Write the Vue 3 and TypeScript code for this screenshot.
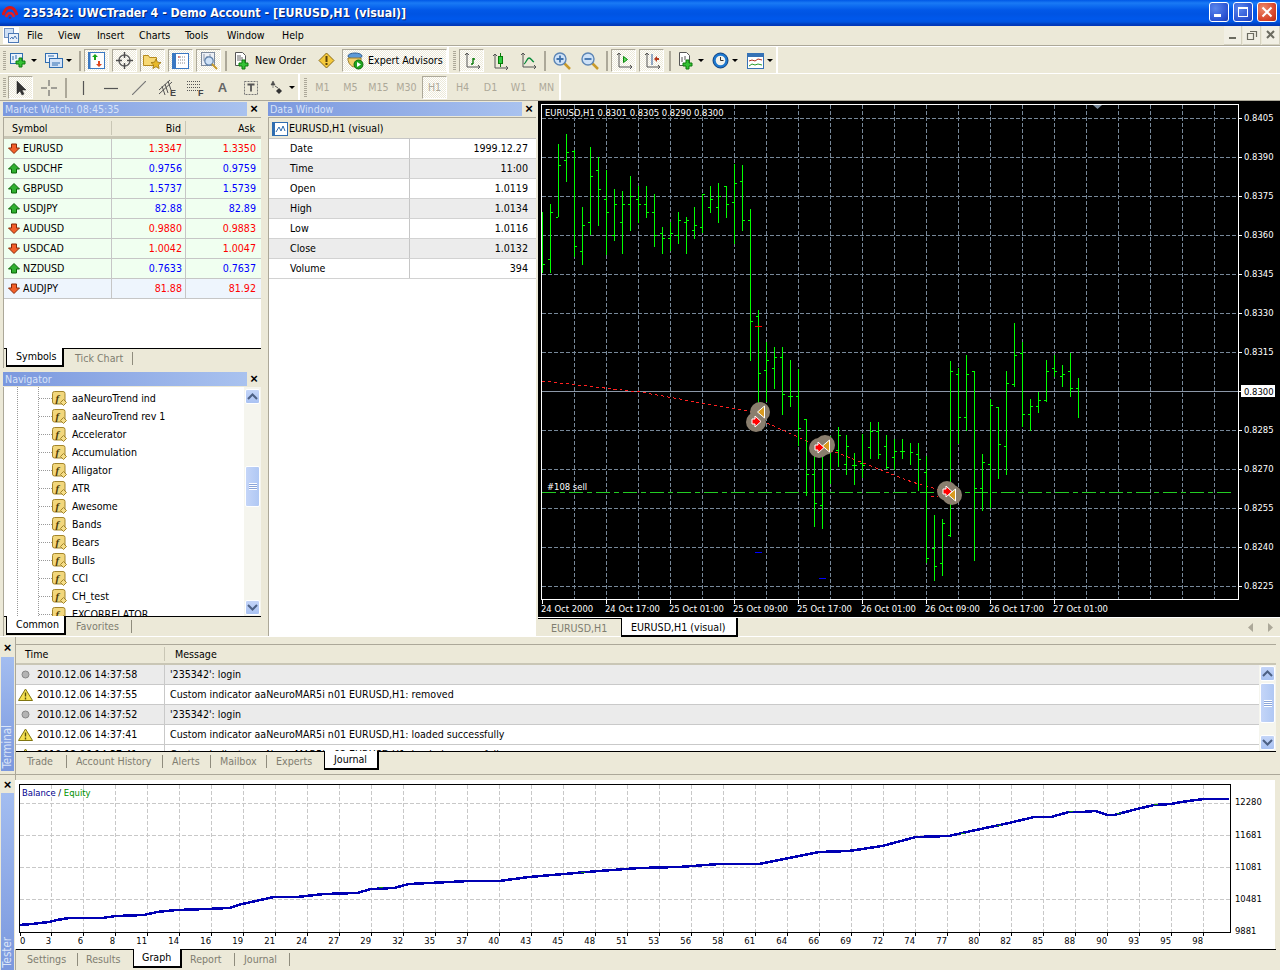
<script setup lang="ts">
type Bar = [number, number, number, number | null, number | null]
const bars: Bar[] = [
  [542,212,273,null,264],[550,204,273,259,212],[558,144,217,217,165],[566,134,182,160,152],[574,150,257,151,246],
  [582,207,265,251,225],[590,147,235,222,176],[598,157,226,170,189],[606,170,255,199,212],[614,189,241,235,204],
  [622,191,254,222,204],[630,176,231,204,196],[638,186,223,199,204],[646,186,218,204,212],[654,194,247,212,235],
  [662,227,254,233,238],[670,222,251,238,233],[678,212,244,235,220],[686,217,254,222,220],[694,207,239,230,225],
  [702,194,233,227,194],[710,186,213,207,199],[718,183,223,207,196],[726,186,218,186,204],[734,164,244,202,183],
  [742,165,231,181,220],[750,209,361,220,321],[758,310,410,316,373],[766,342,402,370,360],[774,347,389,368,357],
  [782,347,415,357,394],[790,360,407,396,396],[798,369,446,396,428],[806,419,496,419,474],[814,442,527,474,503],
  [822,440,529,505,453],[830,436,484,451,447],[838,427,467,450,435],[846,435,475,464,446],[854,453,485,465,465],
  [862,434,478,463,465],[870,422,459,447,431],[878,422,459,431,454],[886,435,469,446,467],[894,439,470,457,451],
  [902,439,459,451,451],[910,443,465,null,452],[918,443,491,454,459],[926,456,563,472,558],[934,515,581,548,566],
  [942,519,576,563,523],[950,361,537,535,371],[958,368,444,374,417],[966,355,431,417,374],[974,371,561,371,488],
  [982,454,511,488,462],[990,399,508,464,405],[998,407,479,407,444],[1006,371,475,446,383],[1014,323,387,384,355],
  [1022,342,427,353,414],[1030,399,431,414,406],[1038,392,413,406,400],[1046,360,402,400,371],[1054,355,377,368,371],
  [1062,365,387,376,374],[1070,353,397,371,388],[1078,378,418,388,null]
]
const hLines = Array.from({ length: 13 }, (_, i) => 118 + Math.round(i * 39))
const prices = ['0.8405','0.8390','0.8375','0.8360','0.8345','0.8330','0.8315','0.8300','0.8285','0.8270','0.8255','0.8240','0.8225']
const vLines = Array.from({ length: 21 }, (_, i) => 574 + i * 32)
const timeLabels = ['24 Oct 2000','24 Oct 17:00','25 Oct 01:00','25 Oct 09:00','25 Oct 17:00','26 Oct 01:00','26 Oct 09:00','26 Oct 17:00','27 Oct 01:00']

const quotes = [
  { s: 'EURUSD', b: '1.3347', a: '1.3350', up: false },
  { s: 'USDCHF', b: '0.9756', a: '0.9759', up: true },
  { s: 'GBPUSD', b: '1.5737', a: '1.5739', up: true },
  { s: 'USDJPY', b: '82.88', a: '82.89', up: true },
  { s: 'AUDUSD', b: '0.9880', a: '0.9883', up: false },
  { s: 'USDCAD', b: '1.0042', a: '1.0047', up: false },
  { s: 'NZDUSD', b: '0.7633', a: '0.7637', up: true },
  { s: 'AUDJPY', b: '81.88', a: '81.92', up: false, sel: true }
]
const navItems = ['aaNeuroTrend ind','aaNeuroTrend rev 1','Accelerator','Accumulation','Alligator','ATR','Awesome','Bands','Bears','Bulls','CCI','CH_test','EXCORRELATOR']
const dataRows = [['Date','1999.12.27'],['Time','11:00'],['Open','1.0119'],['High','1.0134'],['Low','1.0116'],['Close','1.0132'],['Volume','394']]
const logs = [
  { w: false, t: '2010.12.06 14:37:58', m: "'235342': login" },
  { w: true, t: '2010.12.06 14:37:55', m: 'Custom indicator aaNeuroMAR5i n01 EURUSD,H1: removed' },
  { w: false, t: '2010.12.06 14:37:52', m: "'235342': login" },
  { w: true, t: '2010.12.06 14:37:41', m: 'Custom indicator aaNeuroMAR5i n01 EURUSD,H1: loaded successfully' },
  { w: true, t: '2010.12.06 14:37:41', m: 'Custom indicator aaNeuroMAR5i n02 EURUSD,H1: loaded successfully' }
]
const menus = [
  { t: 'File', w: 31 },{ t: 'View', w: 39 },{ t: 'Insert', w: 42 },{ t: 'Charts', w: 46 },{ t: 'Tools', w: 42 },{ t: 'Window', w: 55 },{ t: 'Help', w: 40 }
]
const timeframes = [
  { t: 'M1' },{ t: 'M5' },{ t: 'M15' },{ t: 'M30' },{ t: 'H1', on: true },{ t: 'H4' },{ t: 'D1' },{ t: 'W1' },{ t: 'MN' }
]
interface Tab { t: string; w: number; p: number; on?: boolean; sep?: boolean }
const tabsMW: Tab[] = [{ t: 'Symbols', w: 58, p: 9, on: true },{ t: 'Tick Chart', w: 69, p: 11, sep: true }]
const tabsNav: Tab[] = [{ t: 'Common', w: 60, p: 9, on: true },{ t: 'Favorites', w: 66, p: 10, sep: true }]
const tabsTerm: Tab[] = [
  { t: 'Trade', w: 51, p: 11, sep: true },{ t: 'Account History', w: 96, p: 9, sep: true },{ t: 'Alerts', w: 48, p: 9, sep: true },
  { t: 'Mailbox', w: 56, p: 9, sep: true },{ t: 'Experts', w: 57, p: 9 },{ t: 'Journal', w: 55, p: 9, on: true }
]
const tabsTest: Tab[] = [
  { t: 'Settings', w: 62, p: 11, sep: true },{ t: 'Results', w: 55, p: 8 },{ t: 'Graph', w: 49, p: 8, on: true },
  { t: 'Report', w: 53, p: 8, sep: true },{ t: 'Journal', w: 55, p: 9, sep: true }
]
const balance = '20,925 33,924 50,922 58,920 70,918 103,918 117,916 145,915 158,912 178,910 208,909 230,908 243,904 275,897 298,897 325,894 358,893 372,889 395,888 410,884 430,883 470,881 500,881 530,877 565,874 600,871 640,868 680,867 720,864 760,864 790,858 820,852 850,851 883,846 917,837 950,836 977,830 1010,823 1035,817 1052,817 1070,812 1083,812 1097,811 1108,815 1115,815 1138,809 1155,805 1172,804 1182,802 1205,799 1230,799'
const eqBits = [[380,887],[582,872],[962,833],[998,825],[1070,811],[1118,813],[1155,804]]
const testV = Array.from({ length: 37 }, (_, i) => 52 + i * 32)
const testH = [803, 835, 867, 899]
const testX = ['3','6','8','11','14','16','19','21','24','27','29','32','35','37','40','43','45','48','51','53','56','58','61','64','66','69','72','74','77','80','82','85','88','90','93','95','98']
const testY = [['12280',805],['11681',838],['11081',870],['10481',902],['9881',934]]
</script>

<template>
  <div class="app">
    <header class="titlebar">
      <svg class="logo" width="16" height="16" viewBox="0 0 16 16">
        <path d="M1 10C3 4 6 2.500 8 2.500S13 4 15 10" fill="none" stroke="#d81818" stroke-width="3"/>
        <path d="M4 12c1-3 2.500-4 4-4s3 1 4 4" fill="none" stroke="#e82020" stroke-width="2.500"/>
        <path d="M6.500 13.500c.4-1.200 1-1.800 1.500-1.800s1.100.6 1.500 1.800z" fill="#c01010"/>
      </svg>
      <span class="title-text">235342: UWCTrader 4 - Demo Account - [EURUSD,H1 (visual)]</span>
      <div class="winbtns">
        <span class="wbtn"><svg width="18" height="18" viewBox="0 0 18 18"><rect x="4" y="11" width="7" height="3" fill="#fff"/></svg></span>
        <span class="wbtn"><svg width="18" height="18" viewBox="0 0 18 18"><rect x="4.500" y="4.500" width="9" height="9" fill="none" stroke="#fff"/><rect x="4" y="4" width="10" height="2" fill="#fff"/></svg></span>
        <span class="wbtn wclose"><svg width="18" height="18" viewBox="0 0 18 18"><path d="M4.500 4.500l9 9M13.500 4.500l-9 9" stroke="#fff" stroke-width="2"/></svg></span>
      </div>
    </header>

    <nav class="menubar">
      <svg class="mdi" width="16" height="17" viewBox="0 0 16 17">
        <rect width="16" height="17" fill="#fff"/>
        <rect x="1.500" y="1.500" width="9" height="9" fill="#cfe0f5" stroke="#6d8fc0"/>
        <rect x="5.500" y="6.500" width="10" height="9" fill="#e8f0fa" stroke="#4b78b5"/>
        <path d="M7 12l2-2 1 2 2-3 2 3" fill="none" stroke="#4b78b5"/>
      </svg>
      <span v-for="m in menus" :key="m.t" class="menu-item" :style="{ width: m.w + 'px' }">{{ m.t }}</span>
      <div class="mdi-btns">
        <span class="mbtn"><svg width="12" height="12" viewBox="0 0 12 12"><rect x="2" y="8" width="7" height="2" fill="#6b6b60"/></svg></span>
        <span class="mbtn"><svg width="12" height="12" viewBox="0 0 12 12"><path d="M1.500 4.500h6v6h-6zM4 2.500h6.500v5.500" fill="none" stroke="#6b6b60" stroke-width="1.200"/></svg></span>
        <span class="mbtn"><svg width="12" height="12" viewBox="0 0 12 12"><path d="M2 2l7 7M9 2l-7 7" stroke="#6b6b60" stroke-width="2"/></svg></span>
      </div>
    </nav>

    <section class="toolrow">
      <div class="tgroup g1">
        <i class="grip"></i>
        <span class="tb w30">
          <svg width="18" height="16" viewBox="0 0 18 16"><rect x=".5" y=".5" width="12" height="10" fill="#eaf2fb" stroke="#2f6db0"/><path d="M3 3v4M6 2v4" stroke="#2f6db0"/><path d="M9 5h3v3h3v3h-3v3H9v-3H6V8h3z" fill="#35c235" stroke="#0c7a0c"/></svg>
          <b class="caret"></b>
        </span>
        <span class="tb w35">
          <svg width="18" height="16" viewBox="0 0 18 16"><rect x=".5" y=".5" width="12" height="9" fill="#eaf2fb" stroke="#2f6db0"/><rect x="4.500" y="5.500" width="13" height="9" fill="#d5e4f7" stroke="#2f6db0"/><path d="M7 10h8M7 12h6M3 3h6" stroke="#2f6db0"/></svg>
          <b class="caret"></b>
        </span>
        <i class="sep"></i>
        <span class="tb on">
          <svg width="17" height="17" viewBox="0 0 17 17"><rect x=".5" y=".5" width="16" height="16" fill="#fdfdfd" stroke="#3a78c2"/><rect x=".5" y=".5" width="2" height="16" fill="#3a78c2"/><path d="M7 2l3 3H8v3H6V5H4z" fill="#16a516"/><path d="M11 15l-3-3h2V9h2v3h2z" fill="#e0461c"/></svg>
        </span>
        <span class="tb on">
          <svg width="17" height="17" viewBox="0 0 17 17"><circle cx="8.500" cy="8.500" r="5.500" fill="none" stroke="#5f5f5f" stroke-width="1.400"/><path d="M8.500 0v6M8.500 11v6M0 8.500h6M11 8.500h6" stroke="#4d4d4d" stroke-width="1.400"/></svg>
        </span>
        <span class="tb on">
          <svg width="19" height="18" viewBox="0 0 19 18"><path d="M.5 3.500h5l1 2h7v8H.5z" fill="#f7d873" stroke="#b58a1e"/><path d="M13 7l1.500 3.200 3.500.4-2.600 2.300.7 3.600-3.100-1.800-3.100 1.800.7-3.600L8 10.600l3.500-.4z" fill="#e8b92a" stroke="#9a7410" stroke-width=".8"/></svg>
        </span>
        <span class="tb on">
          <svg width="17" height="16" viewBox="0 0 17 16"><rect x=".5" y=".5" width="16" height="15" fill="#fff" stroke="#3a78c2"/><rect x="1" y="1" width="3" height="14" fill="#3a78c2"/><path d="M6 4h8M6 7h8M6 10h8" stroke="#888" stroke-dasharray="1 1"/><path d="M6 4h2" stroke="#c33"/></svg>
        </span>
        <span class="tb on">
          <svg width="20" height="20" viewBox="0 0 20 20"><rect x="2.500" y="1.500" width="13" height="13" fill="#ecf0f6" stroke="#7d8a9c"/><path d="M5 3v7M8 5v6M11 3v5" stroke="#8f98a8"/><circle cx="10" cy="10" r="4.200" fill="#cfe2f7" stroke="#5d7fa8" stroke-width="1.200"/><path d="M13 13l5 5" stroke="#c89a2a" stroke-width="2"/></svg>
        </span>
        <i class="sep n1"></i>
        <span class="tb w80">
          <svg width="17" height="18" viewBox="0 0 17 18"><path d="M1.500.5h7l3 3v10h-10z" fill="#fff" stroke="#555"/><path d="M3 4h4M3 6h6M3 8h6" stroke="#666"/><path d="M8 8h3v3h3v3h-3v3H8v-3H5v-3h3z" fill="#35c235" stroke="#0c7a0c"/></svg>
          <span class="tb-label">New Order</span>
        </span>
        <span class="tb w26">
          <svg width="17" height="17" viewBox="0 0 17 17"><path d="M8.500 1L16 8.500 8.500 16 1 8.500z" fill="#f5c93a" stroke="#8a6a14"/><rect x="7.500" y="4" width="2" height="6" fill="#5a4208"/><rect x="7.500" y="11" width="2" height="2" fill="#5a4208"/></svg>
        </span>
        <span class="tb w105 on">
          <svg width="18" height="18" viewBox="0 0 18 18"><ellipse cx="9" cy="4" rx="7" ry="3" fill="#5d9ad8" stroke="#2f5f96"/><path d="M2 6h13c.5 3-1 9-6 9S1.500 9 2 6z" fill="#f2cf6a" stroke="#9a7d2a"/><circle cx="12.500" cy="12.500" r="4.500" fill="#1fa51f" stroke="#0d6a0d"/><path d="M11 10l4 2.500-4 2.500z" fill="#fff"/></svg>
          <span class="tb-label">Expert Advisors</span>
        </span>
      </div>
      <div class="tgroup g2">
        <i class="grip"></i>
        <span class="tb on">
          <svg width="16" height="16" viewBox="0 0 16 16"><path d="M3 0v14h13" fill="none" stroke="#555"/><path d="M1 2l2-2 2 2M14 12l2 2-2 2" fill="none" stroke="#555"/><path d="M9 11V5M7 11h2M9 6h2" stroke="#0a7a0a" stroke-width="1.400"/></svg>
        </span>
        <span class="tb">
          <svg width="16" height="18" viewBox="0 0 16 18"><path d="M3 2v14h13" fill="none" stroke="#555"/><path d="M1 4l2-2 2 2M14 14l2 2-2 2" fill="none" stroke="#555"/><rect x="6.500" y="4.500" width="4" height="7" fill="#2ecc40" stroke="#0a7a0a"/><path d="M8.500 1v3M8.500 12v3" stroke="#0a7a0a"/></svg>
        </span>
        <span class="tb">
          <svg width="16" height="16" viewBox="0 0 16 16"><path d="M3 0v14h13" fill="none" stroke="#555"/><path d="M1 2l2-2 2 2M14 12l2 2-2 2" fill="none" stroke="#555"/><path d="M4 11c2-1 3-6 5-6s3 3 5 4" fill="none" stroke="#0a8a3a" stroke-width="1.300"/></svg>
        </span>
        <i class="sep n1"></i>
        <span class="tb">
          <svg width="18" height="18" viewBox="0 0 18 18"><path d="M10 10l7 7" stroke="#c89a2a" stroke-width="2.500"/><circle cx="7" cy="7" r="6" fill="#cfe2f7" stroke="#5d86b5" stroke-width="1.400"/><path d="M3.500 7h7M7 3.500v7" stroke="#3f72ad" stroke-width="1.800"/></svg>
        </span>
        <span class="tb">
          <svg width="18" height="18" viewBox="0 0 18 18"><path d="M10 10l7 7" stroke="#c89a2a" stroke-width="2.500"/><circle cx="7" cy="7" r="6" fill="#cfe2f7" stroke="#5d86b5" stroke-width="1.400"/><path d="M3.500 7h7" stroke="#3f72ad" stroke-width="1.800"/></svg>
        </span>
        <i class="sep n1"></i>
        <span class="tb on">
          <svg width="16" height="16" viewBox="0 0 16 16"><path d="M3 0v14h13" fill="none" stroke="#555"/><path d="M1 2l2-2 2 2M14 12l2 2-2 2" fill="none" stroke="#555"/><path d="M7.500 3.500v6l4-3z" fill="#5fd35f" stroke="#0a8a0a"/></svg>
        </span>
        <span class="tb on">
          <svg width="16" height="16" viewBox="0 0 16 16"><path d="M3 0v14h13" fill="none" stroke="#555"/><path d="M1 2l2-2 2 2M14 12l2 2-2 2" fill="none" stroke="#555"/><path d="M8 1v11" stroke="#2d5a9a"/><path d="M10 6l3-3v6z" fill="#b5381c"/><path d="M12 5h3v2h-3z" fill="#b5381c"/></svg>
        </span>
        <i class="sep n2"></i>
        <span class="tb w33">
          <svg width="17" height="18" viewBox="0 0 17 18"><path d="M1.500.5h7l3 3v10h-10z" fill="#fff" stroke="#555"/><path d="M4 5v5M7 4v4" stroke="#555"/><path d="M8 8h3v3h3v3h-3v3H8v-3H5v-3h3z" fill="#35c235" stroke="#0c7a0c"/></svg>
          <b class="caret"></b>
        </span>
        <span class="tb w30">
          <svg width="17" height="17" viewBox="0 0 17 17"><circle cx="8.500" cy="8.500" r="7.500" fill="#1c78cf" stroke="#0d3f80"/><circle cx="8.500" cy="8.500" r="4.800" fill="#f2f2ec"/><path d="M8.500 5v3.500h3" fill="none" stroke="#333"/></svg>
          <b class="caret"></b>
        </span>
        <span class="tb w34">
          <svg width="17" height="16" viewBox="0 0 17 16"><rect x=".5" y=".5" width="16" height="15" fill="#fff" stroke="#3672b5"/><rect x="1" y="1" width="15" height="3" fill="#3672b5"/><path d="M2 8l3-1 3 1 3-2 4 1" fill="none" stroke="#b03020"/><path d="M2 13l3-2 3 1 3-1 4 1" fill="none" stroke="#2a9a2a"/></svg>
          <b class="caret"></b>
        </span>
      </div>
    </section>

    <section class="toolrow">
      <div class="tgroup g3">
        <i class="grip"></i>
        <span class="tb on">
          <svg width="12" height="16" viewBox="0 0 12 16"><path d="M2 1v13l3-3 2 4 2-1-2-4h4z" fill="#333" stroke="#222" stroke-width=".5"/></svg>
        </span>
        <span class="tb">
          <svg width="16" height="16" viewBox="0 0 16 16"><path d="M8 0v6M8 10v6M0 8h6M10 8h6" stroke="#555"/></svg>
        </span>
        <i class="sep n1"></i>
        <span class="tb"><svg width="12" height="14" viewBox="0 0 12 14"><path d="M6.500 0v14" stroke="#555" stroke-width="1.200"/></svg></span>
        <span class="tb"><svg width="14" height="12" viewBox="0 0 14 12"><path d="M0 6.500h14" stroke="#555" stroke-width="1.200"/></svg></span>
        <span class="tb"><svg width="14" height="14" viewBox="0 0 14 14"><path d="M0 14L14 0" stroke="#777" stroke-width="1.200"/></svg></span>
        <span class="tb">
          <svg width="18" height="18" viewBox="0 0 18 18"><path d="M1 11L12 1M1 15L14 3M4 7l3 9M7 5l3 9M10 2l3 9" stroke="#555" stroke-width="1" fill="none"/><text x="12" y="17" class="ico-t">E</text></svg>
        </span>
        <span class="tb">
          <svg width="18" height="18" viewBox="0 0 18 18"><path d="M1 2.500h13M1 5.500h13M1 8.500h13M1 11.500h13" stroke="#555" stroke-dasharray="1 1"/><text x="12" y="17" class="ico-t">F</text></svg>
        </span>
        <span class="tb"><span class="tb-a">A</span></span>
        <span class="tb">
          <svg width="14" height="14" viewBox="0 0 14 14"><rect x=".5" y=".5" width="13" height="13" fill="none" stroke="#777" stroke-dasharray="2 1"/><path d="M3.500 3.500h7M7 3.500v7" stroke="#555" stroke-width="1.800"/></svg>
        </span>
        <span class="tb w30 arrows">
          <svg width="16" height="16" viewBox="0 0 16 16"><path d="M3 1l-2 4h4zM3 5v3" fill="#555" stroke="#333" stroke-width=".5"/><path d="M9 8l-3 3 3 3 3-3z" fill="#333"/><path d="M5 6l3 2" stroke="#555"/></svg>
          <b class="caret"></b>
        </span>
      </div>
      <div class="tgroup g4">
        <i class="grip"></i>
        <span v-for="f in timeframes" :key="f.t" class="tb tf" :class="{ on: f.on }">{{ f.t }}</span>
      </div>
    </section>

    <main class="main">
      <aside class="left">
        <div class="panel mw">
          <div class="ptitle"><span class="ptext">Market Watch: 08:45:35</span><span class="px">×</span></div>
          <div class="ptable">
            <div class="mhead"><span class="c1">Symbol</span><span class="c2">Bid</span><span class="c3">Ask</span></div>
            <div v-for="q in quotes" :key="q.s" class="mrow" :class="{ sel: q.sel }">
              <span class="c1 sym">
                <svg width="12" height="11" viewBox="0 0 12 11">
                  <path v-if="q.up" d="M6 .5L11.500 6H8.500v4h-5V6H.5z" fill="#2fb02f" stroke="#0a640a"/>
                  <path v-else d="M6 10.500L.5 5h3V1h5v4h3z" fill="#f2602a" stroke="#8a2a08"/>
                </svg>
                {{ q.s }}
              </span>
              <span class="c2" :class="q.up ? 'blue' : 'red'">{{ q.b }}</span>
              <span class="c3" :class="q.up ? 'blue' : 'red'">{{ q.a }}</span>
            </div>
            <div class="fill"></div>
            <div class="tabs">
              <span class="tab-gap"></span>
              <span v-for="t in tabsMW" :key="t.t" class="tab" :class="{ on: t.on, tsep: t.sep }" :style="{ width: t.w + 'px', paddingLeft: t.p + 'px' }">{{ t.t }}</span>
            </div>
          </div>
        </div>
        <div class="panel nav">
          <div class="ptitle"><span class="ptext">Navigator</span><span class="px">×</span></div>
          <div class="ntable">
            <div class="nbody">
              <div class="nlist">
                <i class="vdots d1"></i><i class="vdots d2"></i>
                <div v-for="n in navItems" :key="n" class="nrow">
                  <i class="hdots"></i>
                  <svg class="fico" width="15" height="15" viewBox="0 0 15 15">
                    <rect x=".5" y=".5" width="12.500" height="12.500" rx="2" fill="#f2d77c" stroke="#a3852b"/>
                    <text x="3.500" y="10.500" class="fx">f</text>
                    <path d="M11.500 8.500l3 3-3 3-3-3z" fill="#f5dd88" stroke="#a3852b"/>
                  </svg>
                  <span>{{ n }}</span>
                </div>
              </div>
              <div class="vscroll nscroll">
                <span class="sbtn"><svg width="11" height="7" viewBox="0 0 11 7"><path d="M1 6l4.500-4.500L10 6" fill="none" stroke="#4d6185" stroke-width="2"/></svg></span>
                <span class="sthumb"><i></i></span>
                <span class="sbtn bottom"><svg width="11" height="7" viewBox="0 0 11 7"><path d="M1 1l4.500 4.500L10 1" fill="none" stroke="#4d6185" stroke-width="2"/></svg></span>
              </div>
            </div>
            <div class="tabs">
              <span class="tab-gap"></span>
              <span v-for="t in tabsNav" :key="t.t" class="tab" :class="{ on: t.on, tsep: t.sep }" :style="{ width: t.w + 'px', paddingLeft: t.p + 'px' }">{{ t.t }}</span>
            </div>
          </div>
        </div>
      </aside>

      <section class="datawin">
        <div class="ptitle"><span class="ptext">Data Window</span><span class="px">×</span></div>
        <div class="dtable">
          <div class="dhead">
            <svg width="16" height="14" viewBox="0 0 16 14"><rect x=".5" y=".5" width="15" height="13" fill="#fff" stroke="#2f6db0"/><rect x="1" y="1" width="2" height="12" fill="#2f6db0"/><path d="M4 10l3-5 2 4 2-5 2 5" fill="none" stroke="#2f6db0"/></svg>
            <span>EURUSD,H1 (visual)</span>
          </div>
          <div v-for="(r, i) in dataRows" :key="r[0]" class="drow" :class="{ alt: i % 2 === 1 }">
            <span class="dl">{{ r[0] }}</span><span class="dv">{{ r[1] }}</span>
          </div>
        </div>
      </section>

      <section class="chartcol">
        <svg class="chart" width="742" height="516" viewBox="538 101 742 516">
          <g class="grid">
            <path v-for="y in hLines" :key="'h' + y" :d="`M542 ${y}.5H1238`" />
            <path v-for="x in vLines" :key="'v' + x" :d="`M${x}.5 105V599`" />
          </g>
          <path d="M542 391.500H1238" stroke="#8c98a8" shape-rendering="crispEdges"/>
          <path d="M542 381L640 392 753 412M767 423L820 447M830 450L912 482 943 491M931 496h7" fill="none" stroke="#ff2020" stroke-dasharray="3 3" shape-rendering="crispEdges"/>
          <path d="M542 492.500H1234" stroke="#22cc22" stroke-dasharray="14 4 5 4" shape-rendering="crispEdges"/>
          <g v-for="b in bars" :key="b[0]" class="bar">
            <path :d="`M${b[0]}.5 ${b[1]}V${b[2]}`" />
            <path v-if="b[3] !== null" :d="`M${b[0] - 2} ${b[3]}.5h2`" />
            <path v-if="b[4] !== null" :d="`M${b[0] + 1} ${b[4]}.5h2`" />
          </g>
          <path d="M755 326.500h7" stroke="#ff0000" shape-rendering="crispEdges"/>
          <path d="M755 552.500h7M819 578.500h7" stroke="#0000ff" shape-rendering="crispEdges"/>
          <g>
            <circle cx="760" cy="412" r="10" fill="#8a7e6e"/><circle cx="756" cy="422" r="10" fill="#8a7e6e"/>
            <circle cx="825" cy="445" r="10" fill="#8a7e6e"/><circle cx="819" cy="448" r="10" fill="#8a7e6e"/>
            <circle cx="947" cy="491" r="10" fill="#8a7e6e"/><circle cx="952" cy="495" r="10" fill="#8a7e6e"/>
            <path d="M764.500 406v12l-7-6z" fill="#d89a20" stroke="#fff"/>
            <path d="M829.500 440v12l-7-6z" fill="#d89a20" stroke="#fff"/>
            <path d="M955.500 489v12l-7-6z" fill="#d89a20" stroke="#fff"/>
            <path d="M752 419h3v-3l6 5.500-6 5.500v-3h-3z" fill="#ff0000" stroke="#fff"/>
            <path d="M815 445h3v-3l6 5.500-6 5.500v-3h-3z" fill="#ff0000" stroke="#fff"/>
            <path d="M943 489h3v-3l6 5.500-6 5.500v-3h-3z" fill="#ff0000" stroke="#fff"/>
          </g>
          <rect x="541.500" y="104.500" width="697" height="495" fill="none" stroke="#fff" shape-rendering="crispEdges"/>
          <path d="M1093 105h9l-4.500 4z" fill="#778899"/>
          <text x="545" y="116" class="ct">EURUSD,H1  0.8301 0.8305 0.8290 0.8300</text>
          <text x="547" y="490" class="ct">#108 sell</text>
          <g v-for="(p, i) in prices" :key="p">
            <path :d="`M1239 ${hLines[i]}.5h3`" stroke="#fff" shape-rendering="crispEdges"/>
            <text v-if="p !== '0.8300'" x="1244" :y="hLines[i] + 3" class="ct">{{ p }}</text>
          </g>
          <rect x="1241" y="385" width="34" height="12" fill="#fff"/>
          <text x="1244" y="395" class="ct dark">0.8300</text>
          <g v-for="(t, i) in timeLabels" :key="t">
            <path :d="`M${542 + i * 64}.5 600v4`" stroke="#fff" shape-rendering="crispEdges"/>
            <text :x="541 + i * 64" y="612" class="ct">{{ t }}</text>
          </g>
        </svg>
        <div class="charttabs">
          <span class="ctab">EURUSD,H1</span>
          <span class="ctab on">EURUSD,H1 (visual)</span>
          <span class="carrows">
            <svg width="26" height="9" viewBox="0 0 26 9"><path d="M5 0v9L0 4.500zM20 0v9l5-4.500z" fill="#aca899"/></svg>
          </span>
        </div>
      </section>
    </main>

    <section class="term">
      <div class="side">
        <span class="dockx">×</span>
        <div class="sidebar"><span>Terminal</span></div>
      </div>
      <div class="termbody">
        <div class="loghead"><span class="lh1">Time</span><span class="lh2">Message</span></div>
        <div class="logwrap">
          <div class="loglist">
            <div v-for="(l, i) in logs" :key="i" class="logrow" :class="{ alt: !l.w && i % 2 === 0 }">
              <span class="lt">
                <svg v-if="l.w" width="15" height="13" viewBox="0 0 15 13"><path d="M7.500 1L14.500 12.500H.5z" fill="#f5e050" stroke="#7f7410"/><path d="M7.500 4.500v4M7.500 9.500v2" stroke="#5a5208" stroke-width="1.400"/></svg>
                <svg v-else width="15" height="13" viewBox="0 0 15 13"><circle cx="7.500" cy="6.500" r="3.500" fill="#b4b4b4" stroke="#888"/></svg>
                <span>{{ l.t }}</span>
              </span>
              <span class="lm">{{ l.m }}</span>
            </div>
          </div>
          <div class="vscroll tscroll">
            <span class="sbtn"><svg width="11" height="7" viewBox="0 0 11 7"><path d="M1 6l4.500-4.500L10 6" fill="none" stroke="#4d6185" stroke-width="2"/></svg></span>
            <span class="sthumb small"><i></i></span>
            <span class="sbtn bottom"><svg width="11" height="7" viewBox="0 0 11 7"><path d="M1 1l4.500 4.500L10 1" fill="none" stroke="#4d6185" stroke-width="2"/></svg></span>
          </div>
        </div>
        <div class="tabs wide">
          <span v-for="t in tabsTerm" :key="t.t" class="tab" :class="{ on: t.on, tsep: t.sep }" :style="{ width: t.w + 'px', paddingLeft: t.p + 'px' }">{{ t.t }}</span>
        </div>
      </div>
    </section>

    <section class="tester">
      <div class="side">
        <span class="dockx">×</span>
        <div class="sidebar"><span>Tester</span></div>
      </div>
      <div class="testbody">
        <svg class="graph" width="1260" height="169" viewBox="16 780 1260 169">
          <rect x="16" y="780" width="1260" height="169" fill="#fff"/>
          <g class="tgrid">
            <path v-for="y in testH" :key="'th' + y" :d="`M21 ${y}.5H1231`" />
            <path v-for="x in testV" :key="'tv' + x" :d="`M${x}.5 785V932`" />
          </g>
          <polyline :points="balance" fill="none" stroke="#0000b4" stroke-width="2.500" shape-rendering="crispEdges"/>
          <path v-for="e in eqBits" :key="e[0]" :d="`M${e[0]} ${e[1]}.5h4`" stroke="#109010" shape-rendering="crispEdges"/>
          <rect x="20.500" y="784.500" width="1211" height="148" fill="none" stroke="#000" shape-rendering="crispEdges"/>
          <text x="23" y="796" class="gt"><tspan fill="#000090">Balance</tspan><tspan fill="#000"> / </tspan><tspan fill="#009000">Equity</tspan></text>
          <path d="M21.500 933v3" stroke="#000" shape-rendering="crispEdges"/>
          <text x="21" y="944" class="gt">0</text>
          <g v-for="(t, i) in testX" :key="t">
            <path :d="`M${52 + i * 32}.5 933v3`" stroke="#000" shape-rendering="crispEdges"/>
            <text :x="52 + i * 32" y="944" class="gt end">{{ t }}</text>
          </g>
          <g v-for="t in testY" :key="t[0]">
            <text x="1236" :y="Number(t[1])" class="gt">{{ t[0] }}</text>
          </g>
        </svg>
        <div class="tabs wide">
          <span v-for="t in tabsTest" :key="t.t" class="tab" :class="{ on: t.on, tsep: t.sep }" :style="{ width: t.w + 'px', paddingLeft: t.p + 'px' }">{{ t.t }}</span>
        </div>
      </div>
    </section>
  </div>
</template>

<style scoped>
.app { width: 1280px; height: 970px; overflow: hidden; background: #ece9d8; display: flex; flex-direction: column; font-family: "DejaVu Sans Condensed", "DejaVu Sans", "Liberation Sans", sans-serif; font-stretch: condensed; font-size: 10.600px; line-height: 1; color: #000; }
svg { display: block; flex: none; }
i, b { display: block; font-style: normal; flex: none; }

.titlebar { height: 26px; flex: none; display: flex; align-items: center; padding: 0 3px 2px 2px; box-sizing: border-box; background: linear-gradient(#0058e6 0, #1a7af5 3px, #0e6cf0 6px, #0258e8 10px, #0054e3 14px, #0058ec 19px, #0054e0 22px, #0040c0 24px, #0034b8 26px); }
.logo { margin-top: 2px; }
.title-text { margin-left: 5px; margin-top: 3px; color: #fff; font-weight: 700; font-size: 12.300px; text-shadow: 1px 1px 0 #0a246a; }
.winbtns { margin-left: auto; display: flex; gap: 4px; }
.wbtn { width: 20px; height: 20px; box-sizing: border-box; border: 1px solid #fff; border-radius: 3px; background: radial-gradient(circle at 30% 30%, #5a86ec, #2a52d2 70%, #1c3cb0); display: flex; align-items: center; justify-content: center; }
.wclose { background: radial-gradient(circle at 30% 30%, #ec8a6a, #d8452a 65%, #b82c10); }

.menubar { height: 20px; flex: none; display: flex; align-items: center; border-bottom: 1px solid #aca899; box-sizing: border-box; }
.mdi { margin: 0 8px 0 3px; }
.menu-item { display: block; }
.mdi-btns { margin-left: auto; display: flex; gap: 1px; }
.mbtn { width: 17px; height: 18px; background: #f1efe4; border-right: 1px solid #d5d2c0; border-bottom: 1px solid #d5d2c0; display: flex; align-items: center; justify-content: center; }

.toolrow { height: 27px; flex: none; display: flex; align-items: center; box-sizing: border-box; border-top: 1px solid #fff; }
.tgroup { display: flex; align-items: center; height: 26px; padding-top: 1px; box-sizing: border-box; border-right: 2px solid #fff; }
.g1 { width: 449px; padding-left: 3px; }
.g2 { width: 327px; padding-left: 2px; margin-left: 2px; }
.g3 { width: 300px; padding-left: 3px; }
.g4 { width: 260px; padding-left: 3px; margin-left: 1px; }
.grip { width: 3px; height: 20px; margin-right: 2px; background: repeating-linear-gradient(#aca899 0 1px, transparent 1px 2px); }
.g2 .grip, .g4 .grip { margin-right: 3px; }
.tb { width: 25px; height: 23px; margin-right: 3px; flex: none; box-sizing: border-box; display: flex; align-items: center; justify-content: center; position: relative; }
.tb.on { background: repeating-conic-gradient(#fff 0 25%, #ece9d8 0 50%) 0 0/2px 2px; border: 1px solid; border-color: #aca899 #fff #fff #aca899; }
.w30 { width: 30px; } .w33 { width: 33px; } .w34 { width: 34px; } .w35 { width: 35px; } .w80 { width: 80px; } .w26 { width: 26px; } .w105 { width: 105px; }
.caret { width: 0; height: 0; border: 3px solid transparent; border-top: 3px solid #000; border-bottom: 0; margin-left: 3px; }
.w80 { justify-content: flex-start; padding-left: 4px; }
.tb-label { margin-left: 4px; white-space: nowrap; }
.w105 { justify-content: flex-start; padding-left: 3px; }
.sep { width: 2px; height: 20px; margin-right: 3px; background: #aca899; flex: none; }
.sep.n1 { margin-left: 1px; }
.sep.n2 { margin-left: 2px; }
.tf { color: #aca899; }
.arrows { margin-right: 0; padding-left: 4px; justify-content: flex-start; width: 33px; }
.tb-a { font: 700 13px "Liberation Sans", sans-serif; color: #666; }
.ico-t { font: 700 9px "Liberation Sans", sans-serif; fill: #444; }

.main { height: 536px; flex: none; display: flex; border-top: 1px solid #aca899; box-sizing: border-box; }
.left { width: 265px; flex: none; padding: 1px 0 0 3px; box-sizing: border-box; display: flex; flex-direction: column; }
.panel { width: 258px; display: flex; flex-direction: column; }
.mw { height: 266px; }
.nav { margin-top: 4px; flex: 1; min-height: 0; }
.ptitle { height: 14px; flex: none; display: flex; align-items: center; position: relative; }
.ptext { flex: 1; height: 14px; line-height: 14px; padding-left: 2px; color: #d8e3f8; background: linear-gradient(90deg, #7b98de, #a9c2ef); }
.px { width: 14px; text-align: center; font: 700 13px/14px "Liberation Sans", sans-serif; }
.ptable { flex: 1; min-height: 0; display: flex; flex-direction: column; margin-top: 1px; background: #fff; border: solid #aca899; border-width: 1px 0 0 1px; box-sizing: border-box; }
.mhead { height: 21px; flex: none; display: flex; align-items: center; background: #ece9d8; border-bottom: 3px solid #c9c6b5; box-sizing: border-box; padding-top: 2px; }
.mhead span { height: 14px; line-height: 14px; }
.c1 { width: 107px; box-sizing: border-box; padding-left: 8px; flex: none; }
.c2 { width: 74px; box-sizing: border-box; text-align: right; padding-right: 4px; flex: none; }
.c3 { width: 76px; box-sizing: border-box; text-align: right; padding-right: 5px; flex: none; }
.mhead .c2, .mhead .c3 { border-left: 1px solid #c9c6b5; }
.mhead .c3 { padding-right: 6px; }
.mrow { height: 20px; flex: none; display: flex; align-items: stretch; background: #f0fff0; box-sizing: border-box; border-bottom: 1px solid #c6c6c6; line-height: 19px; }
.mrow.sel { background: #eef5fd; }
.mrow .c2, .mrow .c3 { border-left: 1px solid #c6c6c6; }
.mrow .c2 { padding-right: 3px; } .mrow .c3 { padding-right: 5px; }
.sym { display: flex; align-items: center; gap: 3px; padding-left: 4px; }
.red { color: #ff0000; } .blue { color: #0000ff; }
.fill { flex: 1; }
.tabs { height: 19px; flex: none; display: flex; border-top: 1px solid #000; background: #ece9d8; }
.tab-gap { width: 2px; flex: none; }
.tab { height: 16px; line-height: 17px; margin-top: 1px; flex: none; box-sizing: border-box; color: #7f7d70; display: block; position: relative; white-space: nowrap; }
.tab.tsep::after { content: ""; position: absolute; right: 0; top: 2px; height: 13px; width: 1px; background: #8f8c7d; }
.tab.on { height: 19px; margin-top: -1px; background: #fff; color: #000; border: 1px solid #000; border-top: 0; border-width: 1px 2px 2px 1px; line-height: 17px; }
.ntable { flex: 1; min-height: 0; display: flex; flex-direction: column; margin-top: 1px; background: #fff; border-left: 1px solid #aca899; }
.nbody { flex: 1; min-height: 0; display: flex; }
.nlist { flex: 1; overflow: hidden; position: relative; padding-top: 2px; }
.vdots { position: absolute; top: 0; bottom: 0; width: 1px; background: repeating-linear-gradient(#999 0 1px, transparent 1px 2px); }
.d1 { left: 13px; } .d2 { left: 34px; }
.nrow { height: 18px; display: flex; align-items: center; padding-left: 48px; gap: 5px; position: relative; white-space: nowrap; line-height: 18px; }
.hdots { position: absolute; left: 35px; top: 9px; width: 13px; height: 1px; background: repeating-linear-gradient(90deg, #999 0 1px, transparent 1px 2px); }
.fx { font: italic 700 11px "Liberation Serif", serif; fill: #4d3c08; }
.vscroll { width: 17px; flex: none; background: #f5f5ee; display: flex; flex-direction: column; position: relative; }
.nscroll { padding-top: 2px; }
.sbtn { height: 15px; flex: none; margin: 0 1px; border: 1px solid #fff; border-radius: 2px; box-sizing: border-box; background: linear-gradient(#c4d5f8, #a9c2f2); display: flex; align-items: center; justify-content: center; }
.sbtn.bottom { position: absolute; bottom: 1px; left: 0; width: 15px; }
.sthumb { position: absolute; left: 1px; width: 15px; box-sizing: border-box; border: 1px solid #fff; border-radius: 2px; background: linear-gradient(90deg, #c4d5f8, #b0c8f4); display: flex; align-items: center; justify-content: center; }
.nscroll .sthumb { top: 79px; height: 41px; }
.sthumb i { width: 8px; height: 7px; background: repeating-linear-gradient(#fff 0 1px, #8aa4d8 1px 2px); }
.tscroll .sthumb { top: 18px; height: 40px; }

.datawin { width: 268px; margin-left: 3px; flex: none; padding-top: 1px; display: flex; flex-direction: column; }
.dtable { flex: 1; margin-top: 1px; background: #fff; border: solid #aca899; border-width: 1px 0 0 1px; }
.dhead { height: 21px; display: flex; align-items: center; gap: 1px; padding-left: 3px; padding-top: 1px; background: #ece9d8; border-bottom: 1px solid #c6c6c6; box-sizing: border-box; }
.drow { height: 20px; display: flex; box-sizing: border-box; border-bottom: 1px solid #d2d2d2; line-height: 19px; }
.drow.alt { background: #ececec; }
.dl { width: 141px; padding-left: 21px; box-sizing: border-box; border-right: 1px solid #c6c6c6; }
.dv { flex: 1; text-align: right; padding-right: 8px; }

.chartcol { flex: 1; margin-left: 2px; display: flex; flex-direction: column; min-width: 0; }
.chart { background: #000; }
.grid path { stroke: #778899; stroke-dasharray: 4 2; shape-rendering: crispEdges; }
.bar path { stroke: #00ff00; fill: none; shape-rendering: crispEdges; }
.ct { font-size: 9.400px; fill: #fff; white-space: pre; }
.ct.dark { fill: #000; }
.charttabs { height: 19px; display: flex; flex: none; border-top: 1px solid #fff; position: relative; }
.ctab { width: 84px; padding-left: 13px; box-sizing: border-box; line-height: 18px; color: #7f7d70; border: solid #000; border-width: 1px 1px 0 0; }
.ctab.on { width: 116px; padding-left: 9px; background: #fff; color: #000; border-width: 0 2px 2px 0; }
.carrows { margin-left: auto; margin-right: 6px; align-self: center; }

.term { height: 138px; flex: none; display: flex; border-top: 1px solid #fff; box-sizing: border-box; }
.side { width: 15px; flex: none; display: flex; flex-direction: column; padding-left: 1px; box-sizing: border-box; }
.dockx { height: 14px; margin-top: 4px; text-align: center; font: 700 13px/14px "Liberation Sans", sans-serif; width: 13px; }
.sidebar { flex: 1; width: 13px; margin-top: 2px; margin-bottom: 3px; padding-bottom: 2px; box-sizing: border-box; background: linear-gradient(#a3bdf0, #7b98de); display: flex; align-items: flex-end; justify-content: center; }
.sidebar span { writing-mode: vertical-rl; transform: rotate(180deg); color: #dbe5f8; font-size: 11.500px; line-height: 13px; white-space: nowrap; }
.termbody { flex: 1; margin-right: 4px; display: flex; flex-direction: column; padding-top: 7px; min-width: 0; border-left: 1px solid #aca899; }
.loghead { height: 21px; flex: none; display: flex; align-items: center; background: #ece9d8; border-top: 1px solid #aca899; border-bottom: 2px solid #c9c6b5; box-sizing: border-box; }
.lh1 { width: 149px; box-sizing: border-box; padding-left: 9px; border-right: 1px solid #c9c6b5; height: 14px; line-height: 14px; }
.lh2 { padding-left: 10px; }
.logwrap { height: 86px; flex: none; display: flex; overflow: hidden; }
.loglist { flex: 1; overflow: hidden; background: #fff; }
.logrow { height: 20px; display: flex; box-sizing: border-box; border-bottom: 1px solid #c9c9c9; line-height: 19px; }
.logrow.alt { background: #ebebeb; }
.lt { width: 149px; box-sizing: border-box; display: flex; align-items: center; gap: 4px; padding-left: 2px; border-right: 1px solid #c9c9c9; }
.lm { padding-left: 5px; white-space: nowrap; }
.tscroll .sbtn { margin-top: 1px; }

.tester { flex: 1; display: flex; border-top: 1px solid #aca899; box-sizing: border-box; min-height: 0; }
.tester .dockx { margin-top: 3px; }
.tester .sidebar { margin-top: 1px; margin-bottom: 0; }
.testbody { flex: 1; margin-right: 4px; padding-top: 5px; display: flex; flex-direction: column; border-left: 1px solid #aca899; min-width: 0; }
.graph { margin-left: -1px; }
.tgrid path { stroke: #c8c8c8; stroke-dasharray: 4 2; shape-rendering: crispEdges; }
.gt { font-size: 9.400px; fill: #000; }
.gt.end { text-anchor: end; }
</style>
